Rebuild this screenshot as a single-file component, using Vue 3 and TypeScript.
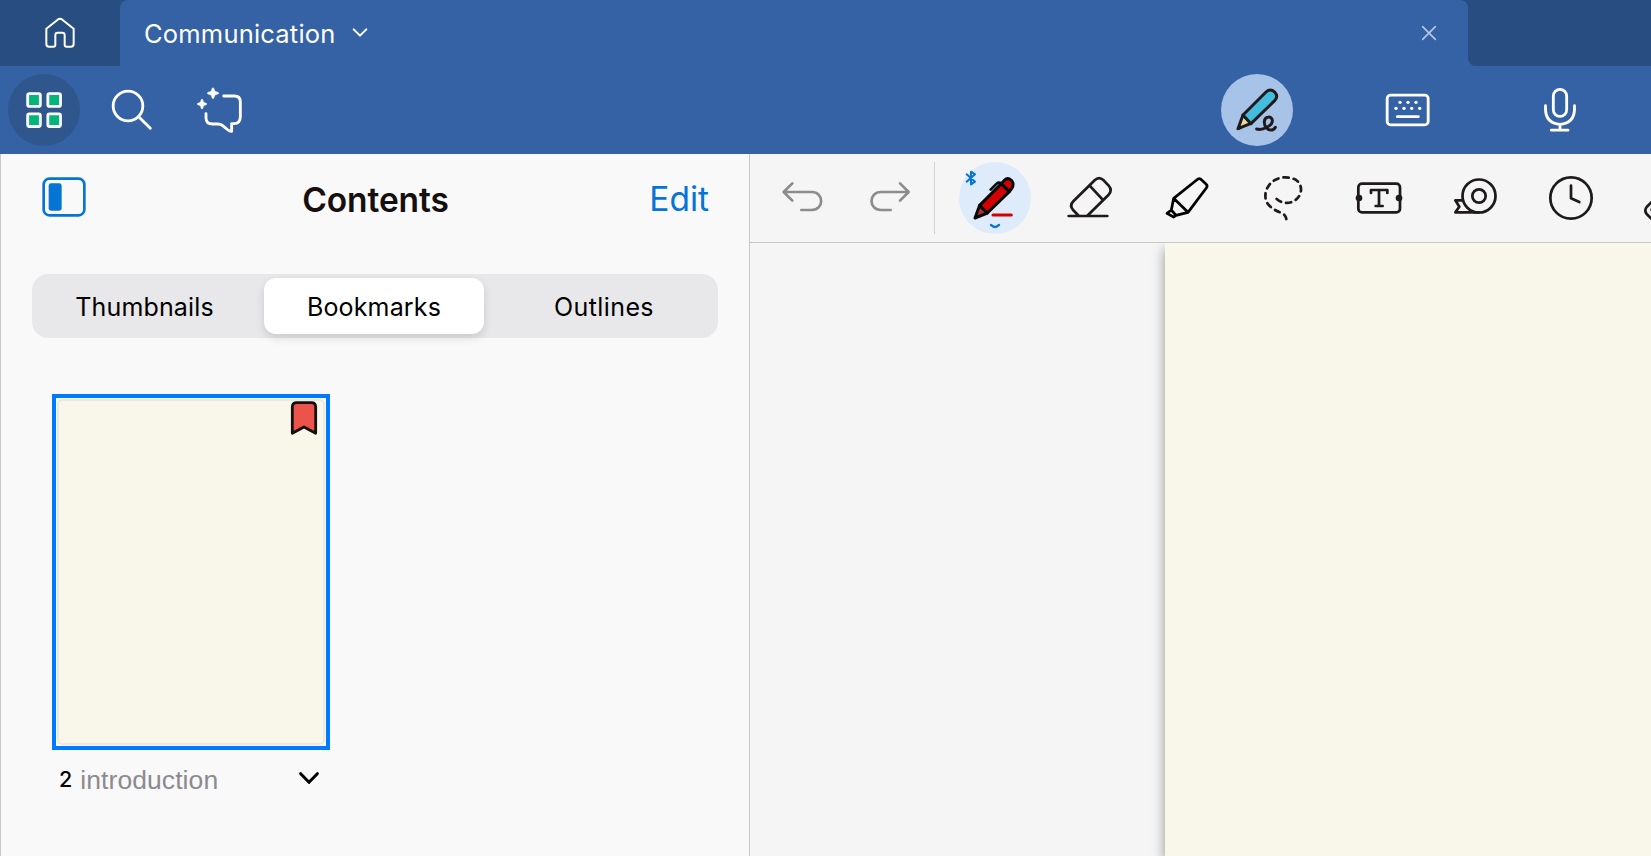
<script setup lang="ts">
import { ref } from 'vue'

const tabs = ['Thumbnails', 'Bookmarks', 'Outlines']
const activeTab = ref('Bookmarks')
</script>

<template>
  <div class="app">
    <header class="tabbar">
      <button class="home" aria-label="Home">
        <svg viewBox="0 0 360 198">
          <path d="M139 86L173 59Q180 54 187 59L221 86V132Q221 140 213 140H200Q194 140 194 134V105Q194 98 187 98H173Q166 98 166 105V134Q166 140 160 140H147Q139 140 139 132Z" class="w5" />
        </svg>
      </button>
      <div class="tab">
        <span class="tab-title">Communication</span>
        <svg class="tab-chevron" viewBox="0 0 48 30"><path d="M5 4L24 23L43 4" class="w5" /></svg>
        <svg class="tab-close" viewBox="0 0 48 48"><path d="M5 5L43 43M43 5L5 43" /></svg>
      </div>
      <div class="rest"><div class="rest-fill"></div></div>
    </header>

    <nav class="mainbar">
      <button class="tool round-dark" aria-label="Contents">
        <svg viewBox="24 222 216 216">
          <g fill="#00b67a" stroke="#fff" stroke-width="8.500">
            <rect x="83" y="281" width="38" height="38" rx="5" />
            <rect x="143.500" y="281" width="38" height="38" rx="5" />
            <rect x="83" y="341.500" width="38" height="38" rx="5" />
            <rect x="143.500" y="341.500" width="38" height="38" rx="5" />
          </g>
        </svg>
      </button>
      <button class="tool" aria-label="Search">
        <svg viewBox="288 222 216 216"><g class="w7"><circle cx="384" cy="318" r="44.500" /><path d="M416 350L451 385" /></g></svg>
      </button>
      <button class="tool" aria-label="Assistant">
        <svg viewBox="552 222 216 216">
          <path class="w7" d="M671 288H703Q721 288 721 306V350Q721 370 702 371H695V394Q690 395 684 390L668 377Q662 372 653 372H638Q618 372 618 353V341" />
          <path fill="#fff" stroke="#fff" stroke-width="2" d="M639 263C642 263 643 272 645 274C648 277 656 276 656 279.500C656 283 648 282 645 285C643 287 642 296 639 296C636 296 635 287 633 285C630 282 622 283 622 279.500C622 276 630 277 633 274C635 272 636 263 639 263ZM606 297C609 297 609 305 611 307C614 309 620 309 620 312C620 315 614 315 611 317C609 319 609 327 606 327C603 327 603 319 601 317C598 315 592 315 592 312C592 309 598 309 601 307C603 305 603 297 606 297Z" />
        </svg>
      </button>
      <div class="modes">
        <button class="tool round-light" aria-label="Write">
          <svg viewBox="63 222 216 216" stroke="#1f1b1c" stroke-width="9" stroke-linecap="round" stroke-linejoin="round">
            <path fill="#e9dc9b" d="M114 386L129 345L153 370Z" />
            <path fill="#44bddd" d="M129 345L198 276Q211 264 224 276Q236 289 224 302L153 371Z" />
            <path fill="#1f1b1c" stroke-width="3" d="M112 388L116 376L124 384Z" />
            <path fill="none" d="M170 387C188 392 218 377 217 361C215 347 194 348 193 365C192 381 204 391 214 390Q221 390 226 382" />
          </svg>
        </button>
        <button class="tool" aria-label="Keyboard">
          <svg viewBox="519 222 216 216">
            <rect class="w7" x="561.500" y="285.500" width="123" height="89" rx="10" />
            <path class="w7" d="M592 350H655" />
            <g fill="#fff"><circle cx="600" cy="307" r="5" /><circle cx="624" cy="307" r="5" /><circle cx="648" cy="307" r="5" /><circle cx="588" cy="325" r="5" /><circle cx="612" cy="325" r="5" /><circle cx="635" cy="325" r="5" /><circle cx="659" cy="325" r="5" /></g>
          </svg>
        </button>
        <button class="tool" aria-label="Record">
          <svg viewBox="975 222 216 216"><g class="w7"><rect x="1060" y="268" width="40" height="81" rx="20" /><path d="M1036.500 317V329Q1038 370 1080 373Q1122 370 1123.500 329V317M1080 373V390M1054 390.500H1104" /></g></svg>
        </button>
      </div>
    </nav>

    <main class="body">
      <aside class="sidebar">
        <div class="side-head">
          <svg class="panel-icon" viewBox="126 81 132 120">
            <rect x="131" y="86" width="122" height="110" rx="17" fill="none" stroke="#0674d4" stroke-width="8" />
            <rect x="146" y="100" width="39" height="82" rx="7" fill="#0674d4" />
          </svg>
          <h1>Contents</h1>
          <button class="edit">Edit</button>
        </div>
        <div class="segments">
          <button v-for="t in tabs" :key="t" class="segment" :class="{ active: t === activeTab }" @click="activeTab = t">{{ t }}</button>
        </div>
        <div class="item">
          <div class="thumb">
            <div class="sheet"></div>
            <svg class="mark" viewBox="780 60 84 108"><path d="M787 160V81Q787 68 800 68H844Q857 68 857 81V160L822 141Z" fill="#ec544b" stroke="#15100f" stroke-width="8.500" stroke-linejoin="round" /></svg>
          </div>
          <div class="caption">
            <span class="num">2</span>
            <span class="name">introduction</span>
            <svg class="more" viewBox="804 150 66 48"><path d="M812 161L837 187L862 161" fill="none" stroke="#000" stroke-width="9" stroke-linecap="round" stroke-linejoin="round" /></svg>
          </div>
        </div>
      </aside>

      <section class="editor">
        <div class="toolbar">
          <button class="tool" aria-label="Undo"><svg viewBox="48 36 216 216"><path class="gray" d="M127 100L101 126L127 152M102 126H185C223 126 223 180 185 180H154" /></svg></button>
          <button class="tool redo" aria-label="Redo"><svg viewBox="312 36 216 216"><path class="gray" d="M450 100L476 126L450 152M475 126H393C355 126 355 180 393 180H422" /></svg></button>
          <div class="divider"></div>
          <button class="tool round-pale" aria-label="Pen">
            <svg viewBox="627 36 216 216" stroke-linecap="round" stroke-linejoin="round">
              <path d="M650 73L675 95L663 103V65L675 73L650 95" fill="none" stroke="#0674d4" stroke-width="6" />
              <g stroke="#070707" stroke-width="9">
                <path d="M675 204L689 166L712 189Z" fill="#b72f35" />
                <path d="M689 166L754 101L778 125L712 189Z" fill="#d50000" />
                <path d="M754 101L764 90Q773 81 784 91Q794 103 785 116L778 125Z" fill="#d50000" />
                <path d="M722 119L740 101Q747 95 754 101" fill="none" stroke-width="8" />
                <path d="M674 203L680 195L683 200Z" fill="#070707" stroke-width="3" />
              </g>
              <path d="M729 195H784" fill="none" stroke="#d50000" stroke-width="9" />
              <path d="M723 225L731 230Q735 232 739 230L747 225" fill="none" stroke="#0674d4" stroke-width="7" />
            </svg>
          </button>
          <button class="tool" aria-label="Eraser"><svg viewBox="45 36 216 216"><path class="ink" d="M86 198H202M116 197L100 181Q87 167 100 154L164 91Q177 78 191 91L206 107Q218 121 206 134L142 197M149 107L188 149" /></svg></button>
          <button class="tool" aria-label="Highlighter"><svg viewBox="333 36 216 216"><path class="ink black" d="M401 145L470 90Q478 82 485 90L498 102Q504 107 499 114L444 187ZM401 145L394 180L408 196L444 187M394 180L381 190L401 201L408 196" /></svg></button>
          <button class="tool" aria-label="Lasso"><svg viewBox="621 36 216 216"><path class="ink" pathLength="115" stroke-dasharray="5 5" d="M710 147C738 171 779 156 783 121C784 92 759 81 732 82C698 84 671 113 677 147C682 169 703 180 720 187Q737 193 739 207" /></svg></button>
          <button class="tool" aria-label="Text">
            <svg viewBox="9 36 216 216"><g class="ink"><rect x="55" y="101" width="125" height="86" rx="11" /><path d="M93 129V120H142V129M117 120V168M107 168H128" /></g><circle cx="57" cy="144" r="10" fill="#1f1b1c" /><circle cx="177" cy="144" r="10" fill="#1f1b1c" /></svg>
          </button>
          <button class="tool" aria-label="Tape"><svg viewBox="297 36 216 216"><g class="ink"><circle cx="417" cy="138" r="49.500" /><circle cx="417" cy="138" r="20" /><path d="M417 187H346L358 170L346 151H368" /></g></svg></button>
          <button class="tool" aria-label="Timer"><svg viewBox="585 36 216 216"><g class="ink"><circle cx="693" cy="144" r="62" /><path d="M693 107V145L718 156" /></g></svg></button>
          <button class="tool" aria-label="Ruler"><svg viewBox="873 36 216 216"><path class="ink" d="M937 154L920 171Q912 181 920 192L937 209M938 174Q932 179 938 185" /></svg></button>
        </div>
        <div class="canvas"><div class="paper"></div></div>
      </section>
    </main>
  </div>
</template>

<style>
body { margin: 0; overflow: hidden; }
</style>

<style scoped>
.app { width: 100vw; height: 100vh; display: flex; flex-direction: column; overflow: hidden; font-family: Inter, "Liberation Sans", sans-serif; background: #f9f9f9; }
button { border: 0; padding: 0; margin: 0; background: none; font: inherit; color: inherit; }
svg { display: block; flex: none; }
.tabbar { height: 66px; display: flex; flex: none; background: #284d80; }
.home { width: 120px; height: 66px; flex: none; }
.home svg { width: 120px; height: 66px; }
.tab { width: 1348px; box-sizing: border-box; flex: none; display: flex; align-items: center; padding: 0 31.500px 0 24px; background: #3562a4; border-radius: 8px 8px 0 0; color: #fff; }
.tab-title { font-size: 25.500px; line-height: 30px; letter-spacing: 0.200px; margin-top: 1px; }
.tab-chevron { width: 16px; height: 10px; margin: 0 0 0 16px; }
.tab-close { width: 16px; height: 16px; margin-left: auto; }
.tab-close path { fill: none; stroke: #b6c7e2; stroke-width: 5; stroke-linecap: round; }
.rest { flex: 1; background: #3562a4; }
.rest-fill { height: 66px; background: #284d80; border-bottom-left-radius: 8px; }
.mainbar { height: 88px; flex: none; box-sizing: border-box; display: flex; align-items: center; gap: 16px; padding: 0 54px 0 8px; background: #3562a4; }
.modes { margin-left: auto; display: flex; gap: 80px; }
.tool { width: 72px; height: 72px; flex: none; border-radius: 50%; }
.tool svg { width: 72px; height: 72px; }
.round-dark { background: #30568e; }
.round-light { background: #a8c3e8; }
.round-pale { background: #deebfb; }
.w5, .w7, .gray, .ink { fill: none; stroke: #fff; stroke-linecap: round; stroke-linejoin: round; }
.w5 { stroke-width: 6; }
.w7 { stroke-width: 8.500; }
.gray { stroke: #8c8c8c; stroke-width: 8; }
.ink { stroke: #1f1b1c; stroke-width: 8.200; }
.black { stroke: #000; }
.body { flex: 1; display: flex; min-height: 0; }
.sidebar { width: 750px; flex: none; box-sizing: border-box; border-left: 1px solid #c9c7ca; border-right: 1px solid #c9c9c9; background: #f9f9f9; }
.side-head { height: 88px; display: grid; grid-template-columns: 1fr auto 1fr; align-items: center; padding: 0 40px 0 41px; }
.panel-icon { width: 44px; height: 40px; margin-top: -2px; }
h1 { margin: 4px 0 0; font-size: 33.500px; line-height: 40px; font-weight: 600; letter-spacing: -0.100px; color: #15100f; }
.edit { justify-self: end; font-size: 33.500px; line-height: 40px; color: #0674d4; padding-top: 1px; }
.segments { margin: 32px 31px 0; height: 64px; box-sizing: border-box; display: grid; grid-template-columns: 1fr 220px 1fr; column-gap: 8px; padding: 4px 3px 4px 1px; border-radius: 16px; background: #e8e8ea; }
.segment { height: 56px; border-radius: 12px; font-size: 25px; letter-spacing: 0.150px; color: #000; padding-top: 2px; }
.segment:last-child { letter-spacing: 0.400px; padding-left: 1px; }
.segment.active { background: #fff; box-shadow: 0 4px 8px rgba(0, 0, 0, 0.13); }
.item { width: 278px; margin: 56px 0 0 51px; }
.thumb { position: relative; height: 356px; box-sizing: border-box; border: 4px solid #007aff; padding: 1px; background: #fbfbf7; }
.sheet { height: 100%; box-sizing: border-box; border: 2px solid #e9e9e6; border-radius: 5px; background: #f9f7ea; }
.mark { position: absolute; top: 2px; right: 8px; width: 28px; height: 36px; }
.caption { display: flex; align-items: center; height: 60px; padding: 0 10px 0 7px; }
.num { font-size: 21.500px; line-height: 28px; font-weight: 500; margin-top: -2px; }
.name { font-family: "Liberation Sans", Arial, sans-serif; font-size: 26.500px; line-height: 30px; letter-spacing: 0.080px; color: #8b8b90; margin-left: 8px; }
.more { width: 22px; height: 16px; margin: -4px 0 0 auto; }
.editor { flex: 1; min-width: 0; display: flex; flex-direction: column; background: #f5f5f5; }
.toolbar { height: 89px; flex: none; box-sizing: border-box; border-bottom: 1px solid #c9c9c9; display: flex; align-items: center; gap: 24px; padding-left: 16px; overflow: hidden; background: #f5f5f5; }
.redo { margin-left: -8px; }
.divider { width: 1px; height: 72px; flex: none; background: #d4d4d4; margin-left: -16px; }
.canvas { flex: 1; overflow: hidden; padding-left: 415px; }
.paper { height: 100%; background: #f9f7ea; box-shadow: 0 6px 12px rgba(0, 0, 0, 0.4); }
</style>
